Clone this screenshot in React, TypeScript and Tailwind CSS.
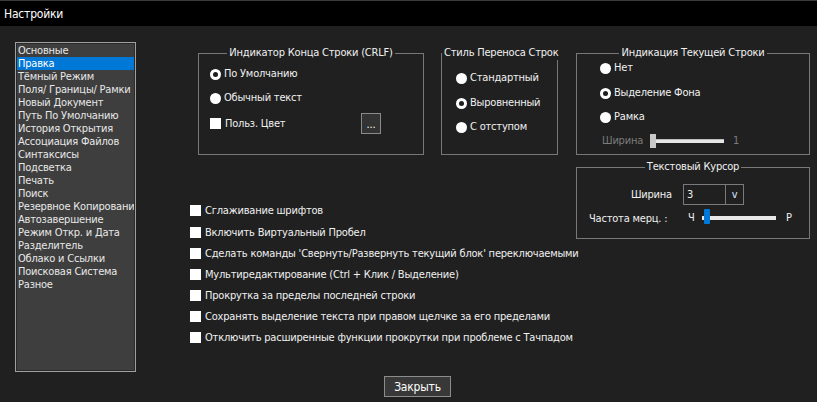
import React from "react";

const listItems = [
  "Основные",
  "Правка",
  "Тёмный Режим",
  "Поля/ Границы/ Рамки",
  "Новый Документ",
  "Путь По Умолчанию",
  "История Открытия",
  "Ассоциация Файлов",
  "Синтаксисы",
  "Подсветка",
  "Печать",
  "Поиск",
  "Резервное Копирование",
  "Автозавершение",
  "Режим Откр. и Дата",
  "Разделитель",
  "Облако и Ссылки",
  "Поисковая Система",
  "Разное",
];

const checks = [
  "Сглаживание шрифтов",
  "Включить Виртуальный Пробел",
  "Сделать команды 'Свернуть/Развернуть текущий блок' переключаемыми",
  "Мультиредактирование  (Ctrl + Клик / Выделение)",
  "Прокрутка за пределы последней строки",
  "Сохранять выделение текста при правом щелчке за его пределами",
  "Отключить расширенные функции прокрутки при проблеме с Тачпадом",
];

function Radio({ checked, label }: { checked?: boolean; label: string }) {
  return (
    <div className="flex items-center h-full">
      <div className="w-[11px] h-[11px] rounded-full bg-white flex items-center justify-center shrink-0">
        {checked && <div className="w-[5px] h-[5px] rounded-full bg-[#1e1e1e]" />}
      </div>
      <span className="ml-[3px] whitespace-nowrap">{label}</span>
    </div>
  );
}

function Box() {
  return <div className="w-[11px] h-[11px] bg-white shrink-0" />;
}

function Group({
  title,
  className,
  children,
}: {
  title: string;
  className: string;
  children: React.ReactNode;
}) {
  return (
    <fieldset className={`border border-[#787878] shrink-0 min-w-0 ${className}`}>
      <legend className="mx-auto px-[2px] leading-[14px] whitespace-nowrap">{title}</legend>
      {children}
    </fieldset>
  );
}

export default function App() {
  return (
    <div className="w-[817px] h-[402px] bg-[#202020] flex flex-col overflow-hidden text-[11px] leading-[14px] tracking-[-0.2px] text-[#f0f0f0] font-['DejaVu_Sans_Condensed','Liberation_Sans',sans-serif]">
      <div className="h-[26px] shrink-0 bg-black border-t border-[#3a3a3a] flex items-center pl-[4px] text-[12px] text-white">
        Настройки
      </div>

      <div className="flex pt-[16px]">
        {/* list box */}
        <div className="ml-[15px] w-[121px] h-[330px] shrink-0 border border-[#a0a0a0]">
          <div className="w-full h-full border border-[#2a2a2a] bg-[#3e3e3e] overflow-hidden">
            {listItems.map((it, i) => (
              <div
                key={it}
                className={`h-[13px] leading-[13px] pl-[1px] whitespace-nowrap overflow-hidden ${
                  i === 1 ? "bg-[#0078d7] text-white" : "text-[#e8e8e8]"
                }`}
              >
                {it}
              </div>
            ))}
          </div>
        </div>

        {/* main */}
        <div className="ml-[54px] flex mt-[4px]">
          {/* left sub column */}
          <div className="w-[368px] shrink-0 flex flex-col">
            <div className="flex pl-[8px] gap-[17px]">
              <Group title="Индикатор Конца Строки (CRLF)" className="w-[226px] h-[109px]">
                <div className="flex flex-col pl-[11px] pt-[4px]">
                  <div className="h-[20px]">
                    <Radio checked label="По Умолчанию" />
                  </div>
                  <div className="h-[20px] mt-[4px]">
                    <Radio label="Обычный текст" />
                  </div>
                  <div className="h-[21px] mt-[5px] flex items-center">
                    <div className="w-[151px] flex items-center">
                      <Box />
                      <span className="ml-[4px]">Польз. Цвет</span>
                    </div>
                    <div className="w-[20px] h-[21px] border border-[#8a8a8a] bg-[#333333] flex items-end justify-center pb-[3px] leading-[10px] text-white">
                      ...
                    </div>
                  </div>
                </div>
              </Group>
              <Group title="Стиль Переноса Строк" className="w-[117px] h-[109px]">
                <div className="flex flex-col pl-[14px] pt-[8px]">
                  <div className="h-[20px]">
                    <Radio label="Стандартный" />
                  </div>
                  <div className="h-[20px] mt-[5px]">
                    <Radio checked label="Выровненный" />
                  </div>
                  <div className="h-[20px] mt-[4px]">
                    <Radio label="С отступом" />
                  </div>
                </div>
              </Group>
            </div>

            <div className="flex flex-col mt-[45px]">
              {checks.map((c, i) => (
                <div
                  key={c}
                  className={`h-[21px] flex items-center whitespace-nowrap ${i === 1 ? "mt-[1px]" : ""}`}
                >
                  <Box />
                  <span className="ml-[4px]">{c}</span>
                </div>
              ))}
            </div>
          </div>

          {/* right sub column */}
          <div className="ml-[18px] w-[234px] shrink-0 flex flex-col">
            <Group title="Индикация Текущей Строки" className="w-[234px] h-[109px]">
              <div className="flex flex-col pl-[23px]">
                <div className="h-[16px]">
                  <Radio label="Нет" />
                </div>
                <div className="h-[16px] mt-[9px]">
                  <Radio checked label="Выделение Фона" />
                </div>
                <div className="h-[16px] mt-[8px]">
                  <Radio label="Рамка" />
                </div>
                <div className="h-[16px] mt-[8px] flex items-center pl-[2px] text-[#7c7c7c]">
                  <span className="w-[48px]">Ширина</span>
                  <div className="w-[6px] h-[14px] bg-[#c8c8c8]" />
                  <div className="w-[68px] h-[4px] bg-[#e6e6e6] border-t border-[#bdbdbd]" />
                  <span className="ml-[9px]">1</span>
                </div>
              </div>
            </Group>
            <Group title="Текстовый  Курсор" className="w-[234px] h-[79px] mt-[5px]">
              <div className="flex flex-col">
                <div className="flex items-center mt-[10px] h-[21px]">
                  <span className="w-[95px] shrink-0 text-right">Ширина</span>
                  <div className="ml-[11px] w-[61px] h-[21px] border border-[#7a7a7a] flex">
                    <div className="w-[42px] border-r border-[#7a7a7a] pl-[3px] flex items-center">3</div>
                    <div className="flex-1 flex items-center justify-center text-[11px] text-[#dde6ff]">v</div>
                  </div>
                </div>
                <div className="flex items-center mt-[4px] h-[16px]">
                  <span className="ml-[12px] w-[99px] shrink-0 mt-[4px] whitespace-nowrap">Частота мерц. :</span>
                  <span className="w-[14px] mt-[2px]">Ч</span>
                  <div className="relative w-[74px] h-[16px] flex items-center">
                    <div className="w-full h-[4px] bg-[#e8e8e8] mt-[2px]" />
                    <div className="absolute left-[2px] top-0 w-[6px] h-[15px] rounded-[1px] bg-[#0078d7]" />
                  </div>
                  <span className="ml-[10px] mt-[2px]">Р</span>
                </div>
              </div>
            </Group>
          </div>
        </div>
      </div>

      <div className="flex pl-[384px] mt-[4px]">
        <button className="w-[67px] h-[21px] border border-[#8c8c8c] bg-[#383838] text-white text-[12px] leading-[14px] flex items-center justify-center">
          Закрыть
        </button>
      </div>
    </div>
  );
}
